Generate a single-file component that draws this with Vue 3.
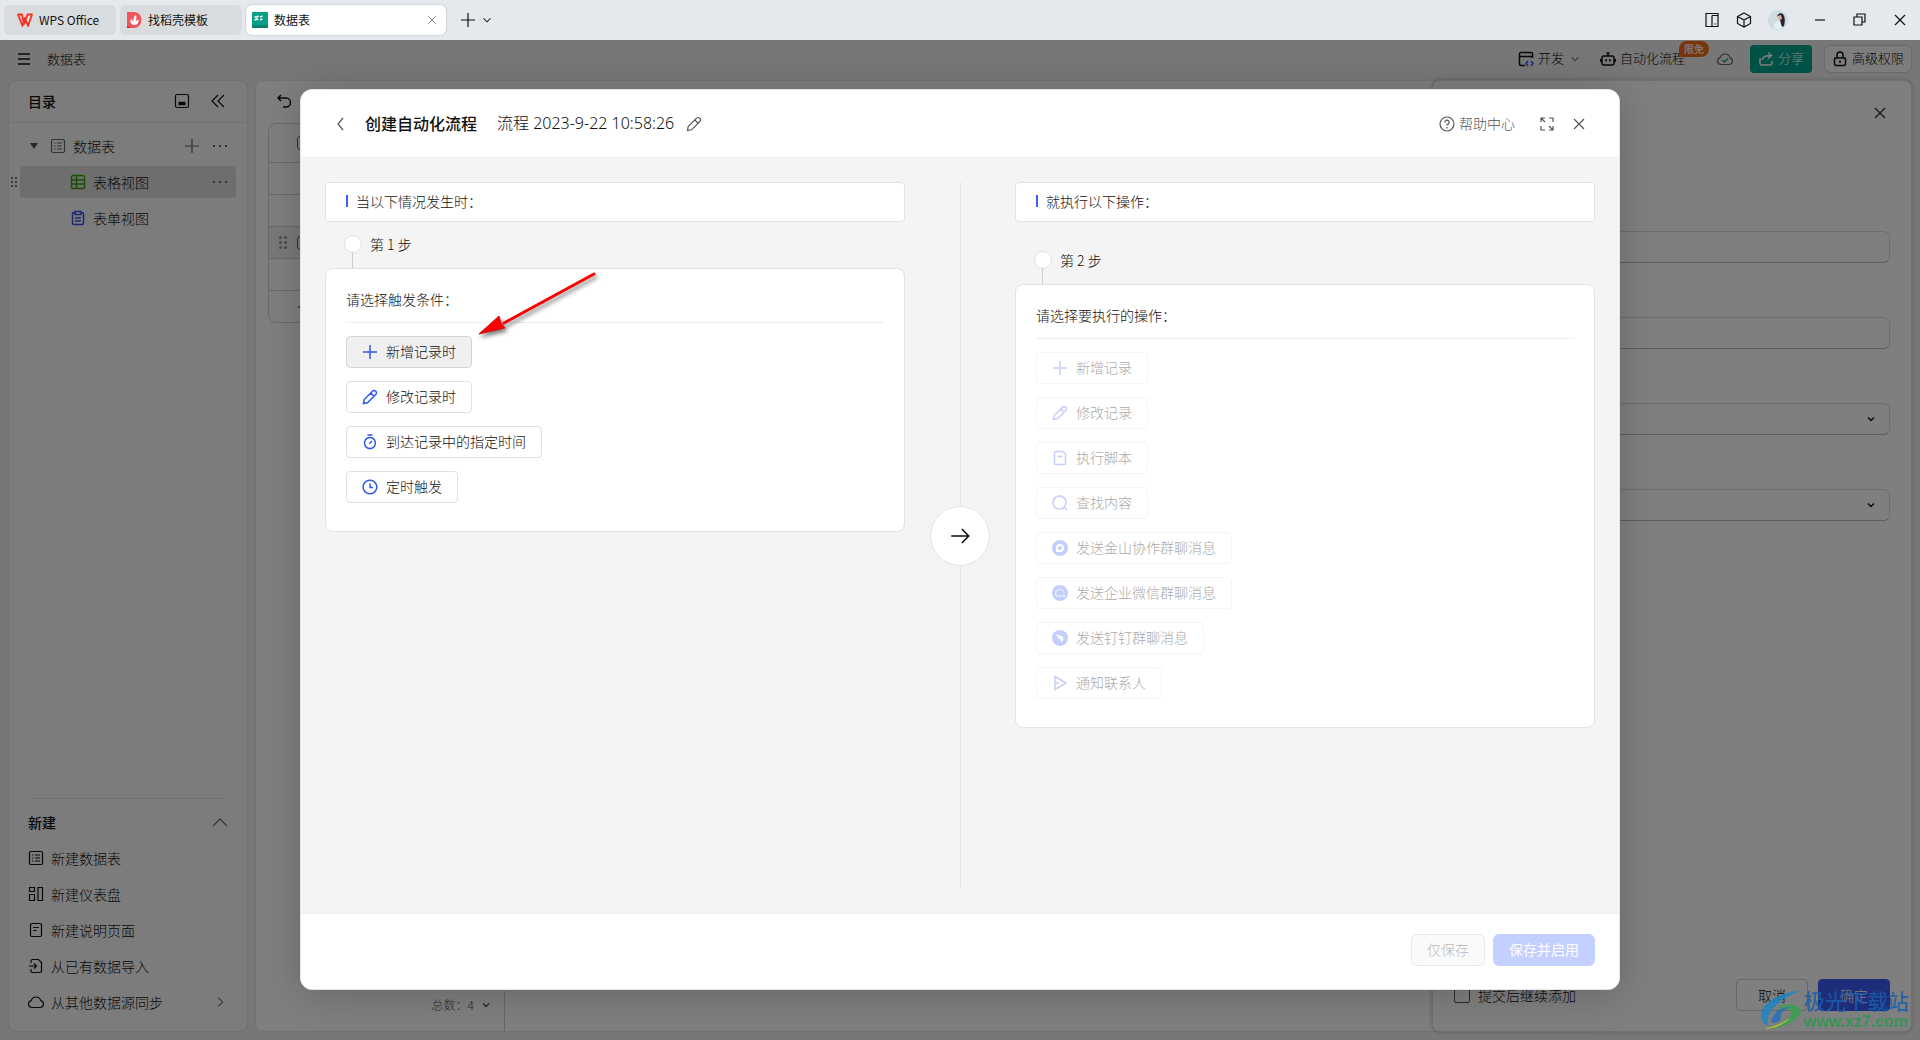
<script setup>
import { h } from 'vue'

const icons = {
  menu: 'M2 3H14M2 8H14M2 13H14',
  close: 'M3 3L13 13M13 3L3 13',
  plus: 'M8 1V15M1 8H15',
  down: 'M4 6L8 10L12 6',
  up: 'M1 12L8 5L15 12',
  right: 'M6 3L11 8L6 13',
  back: 'M10 2L5 8L10 14',
  collapse: 'M8 2L2 8L8 14M14 2L8 8L14 14',
  undo: 'M5 2L2 5L5 8M2 5H10A4 4 0 0 1 10 14H7',
  split: 'M2 1.500H14V14.500H2ZM8 3.500H14M8 3.500V14.500M10.500 12H12',
  cube: 'M8 1L14.500 4.500V11.500L8 15L1.500 11.500V4.500ZM1.500 4.500L8 8L14.500 4.500M8 8V15',
  min: 'M3 8H13',
  restore: 'M2 5H10V13H2ZM5 5V2H13V10H10',
  robot: 'M4 5H12A2 2 0 0 1 14 7V12A2 2 0 0 1 12 14H4A2 2 0 0 1 2 12V7A2 2 0 0 1 4 5ZM8 5V2M6.500 2H9.500M0.500 8V11M15.500 8V11M6 8V10.500M10 8V10.500',
  share: 'M2 7V12A2 2 0 0 0 4 14H12A2 2 0 0 0 14 12V10M4 9C4.500 6 7 4.500 13 4.500M10 1.500L13.500 4.500L10 7.500',
  lock: 'M3.500 7H12.500A1 1 0 0 1 13.500 8V13A1.500 1.500 0 0 1 12 14.500H4A1.500 1.500 0 0 1 2.500 13V8A1 1 0 0 1 3.500 7ZM5 7V4A3 3 0 0 1 11 4V7M8 9.500V12',
  list: 'M3 1.500H13A1.500 1.500 0 0 1 14.500 3V13A1.500 1.500 0 0 1 13 14.500H3A1.500 1.500 0 0 1 1.500 13V3A1.500 1.500 0 0 1 3 1.500ZM4 5H5.500M7 5H12M4 8H5.500M7 8H12M4 11H5.500M7 11H12',
  grid: 'M3 1.500H13A1.500 1.500 0 0 1 14.500 3V13A1.500 1.500 0 0 1 13 14.500H3A1.500 1.500 0 0 1 1.500 13V3A1.500 1.500 0 0 1 3 1.500ZM1.500 6H14.500M1.500 10H14.500M6.500 1.500V14.500',
  clip: 'M5 2.500H4A1.500 1.500 0 0 0 2.500 4V13A1.500 1.500 0 0 0 4 14.500H12A1.500 1.500 0 0 0 13.500 13V4A1.500 1.500 0 0 0 12 2.500H11M5 1.500H11V4.500H5ZM5 8H11M5 11H11',
  board: 'M1.500 1.500H6.500V5.500H1.500ZM1.500 8.500H6.500V14.500H1.500ZM10 1.500H14.500V14.500H10Z',
  page: 'M4 1.500H12A1.500 1.500 0 0 1 13.500 3V13A1.500 1.500 0 0 1 12 14.500H4A1.500 1.500 0 0 1 2.500 13V3A1.500 1.500 0 0 1 4 1.500ZM5 5.500H11M5 8.500H8.500',
  import: 'M3 5V3A1.500 1.500 0 0 1 4.500 1.500H10.500L13.500 4.500V13A1.500 1.500 0 0 1 12 14.500H4.500A1.500 1.500 0 0 1 3 13V11M1 8H8.500M6 5.500L8.500 8L6 10.500',
  cloud: 'M4 13.500A3.500 3.500 0 0 1 3.200 6.600A5 5 0 0 1 12.800 6.600A3.500 3.500 0 0 1 12 13.500Z',
  pencil: 'M1.500 14.500L2.200 10.500L10.500 2.200A2 2 0 0 1 13.800 5.500L5.500 13.800ZM8.800 4L12 7.200',
  timer: 'M8 3.500A5.500 5.500 0 1 1 7.900 3.500ZM5.500 1H10.500M7.300 9.700L10 7',
  clock: 'M8 1.200A6.800 6.800 0 1 1 7.900 1.200ZM8 4.500V8.500H11',
  script: 'M4 1.500H10.500L13.500 4V13A1.500 1.500 0 0 1 12 14.500H4A1.500 1.500 0 0 1 2.500 13V3A1.500 1.500 0 0 1 4 1.500ZM5.500 6.500H10.500',
  search: 'M7.500 1A6.500 6.500 0 1 1 7.400 1ZM12 12L15 15',
  send: 'M3 1.500L14 8L3 14.500ZM3 8H7',
  full: 'M2 6V2H6M10 2H14V6M14 10V14H10M6 14H2V10M2 2L6 6M14 14L10 10',
  arrow: 'M1 8H15M9.500 2.500L15 8L9.500 13.500'
}

const Icon = (p) =>
  h('svg', { class: 'ic', viewBox: '0 0 16 16', 'aria-hidden': 'true' }, [h('path', { d: icons[p.name] })])
Icon.props = ['name']

const createItems = [
  ['list', '新建数据表'],
  ['board', '新建仪表盘'],
  ['page', '新建说明页面'],
  ['import', '从已有数据导入'],
  ['cloud', '从其他数据源同步']
]
const triggers = [
  ['plus', '新增记录时'],
  ['pencil', '修改记录时'],
  ['timer', '到达记录中的指定时间'],
  ['clock', '定时触发']
]
const actions = [
  ['plus', '新增记录'],
  ['pencil', '修改记录'],
  ['script', '执行脚本'],
  ['search', '查找内容'],
  ['woa', '发送金山协作群聊消息'],
  ['wecom', '发送企业微信群聊消息'],
  ['ding', '发送钉钉群聊消息'],
  ['send', '通知联系人']
]
</script>

<template>
  <div class="app">
    <header class="titlebar">
      <button class="tab home">
        <svg class="logo" viewBox="0 0 16 16"><path d="M1 2.500H5L7 12L10.500 2.500H15L11 14L8 6L5.500 14Z" fill="none" stroke="#f5321f" stroke-width="1.800" stroke-linejoin="round" /></svg>
        WPS Office
      </button>
      <button class="tab docer">
        <svg class="logo" viewBox="0 0 16 16"><path d="M1 0H8A7.500 8 0 0 1 8 16H1Z" fill="#f2545b" /><path d="M1 14L5 16H1Z" fill="#c9202c" /><path d="M8 13C4 12 4 9 5 7C6 8 7 9 7.500 10C7 7 8 4 10 3C11 5 10 8 9.500 10C10 8.500 11 8 12.500 7.500C13 11 11 13 8 13Z" fill="#fff" /></svg>
        找稻壳模板
      </button>
      <div class="tab active">
        <svg class="logo" viewBox="0 0 16 16"><rect width="16" height="16" rx="1" fill="#06a087" /><path d="M0 13H16V15A1 1 0 0 1 15 16H1A1 1 0 0 1 0 15Z" fill="#058270" /><path d="M2.500 5H5L6.500 4M8 5L10.500 4M2.500 8L5 7L6 8M8 8L10.500 7" fill="none" stroke="#fff" stroke-width="1.600" /></svg>
        <span class="tab-name">数据表</span>
        <button class="bare thin" aria-label="关闭标签"><Icon name="close" class="s12" /></button>
      </div>
      <button class="bare" aria-label="新建标签"><Icon name="plus" /></button>
      <button class="bare" aria-label="标签列表"><Icon name="down" class="s14" /></button>
      <div class="window">
        <button class="bare" aria-label="分屏"><Icon name="split" /></button>
        <button class="bare" aria-label="应用"><Icon name="cube" /></button>
        <svg class="avatar" viewBox="0 0 20 20"><circle cx="10" cy="10" r="10" fill="#ccdde1" /><path d="M9 6Q11 2 15 4Q18 8 16 16Q14 18 13 14L12 9Z" fill="#2b222b" /><path d="M9 6L13 5L14 9L11 10Z" fill="#d8b0a6" /><path d="M5 17Q7 11 11 11L14 18Q9 21 5 17Z" fill="#e3f0f4" /></svg>
        <button class="bare" aria-label="最小化"><Icon name="min" /></button>
        <button class="bare" aria-label="还原"><Icon name="restore" /></button>
        <button class="bare" aria-label="关闭"><Icon name="close" /></button>
      </div>
    </header>

    <div class="workspace">
      <div class="topbar">
        <button class="bare" aria-label="菜单"><Icon name="menu" class="mid" /></button>
        <span class="doc-name">数据表</span>
        <nav class="tools">
          <button class="bare tool dev">
            <svg class="ic mid" viewBox="0 0 16 16"><path d="M7 14.500H3A1.500 1.500 0 0 1 1.500 13V3A1.500 1.500 0 0 1 3 1.500H13A1.500 1.500 0 0 1 14.500 3V7M1.500 5.500H14.500" /><path d="M10 10L8 12.500L10 15M13 10L15 12.500L13 15" stroke="#3a55f0" /></svg>
            <span>开发</span><Icon name="down" class="chev" />
          </button>
          <button class="bare tool auto"><Icon name="robot" class="mid" /><span>自动化流程</span><span class="badge">限免</span></button>
          <svg class="ic sync" viewBox="0 0 16 16"><path :d="icons.cloud" /><path d="M5.500 9L7.500 11L11 7.500" stroke="#00a060" /></svg>
          <button class="share"><Icon name="share" class="mid" /><span>分享</span></button>
          <button class="perm"><Icon name="lock" class="mid" /><span>高级权限</span></button>
        </nav>
      </div>

      <div class="panels">
        <aside class="sidebar">
          <div class="side-head">
            <h2>目录</h2>
            <button class="bare" aria-label="停靠"><svg class="ic" viewBox="0 0 16 16"><rect x="1.500" y="1.500" width="13" height="13" rx="1.500" /><path d="M4.500 10.500H11.500" stroke-width="3.500" /></svg></button>
            <button class="bare" aria-label="收起"><Icon name="collapse" /></button>
          </div>
          <ul class="tree">
            <li>
              <span class="caret"></span><Icon name="list" class="dim" /><span class="node">数据表</span>
              <button class="bare dim" aria-label="添加"><Icon name="plus" /></button>
              <button class="bare more" aria-label="更多"><i></i><i></i><i></i></button>
            </li>
            <li class="view selected">
              <span class="grip"><i v-for="n in 6" :key="n"></i></span>
              <Icon name="grid" class="green" /><span class="node">表格视图</span>
              <button class="bare more" aria-label="更多"><i></i><i></i><i></i></button>
            </li>
            <li class="view"><Icon name="clip" class="blue" /><span class="node">表单视图</span></li>
          </ul>
          <section class="create">
            <div class="create-head">
              <h2>新建</h2>
              <button class="bare dim" aria-label="折叠"><Icon name="up" /></button>
            </div>
            <button v-for="item in createItems" :key="item[1]" class="bare create-item">
              <Icon :name="item[0]" /><span class="node">{{ item[1] }}</span>
              <Icon v-if="item[0] === 'cloud'" name="right" class="s14 dim" />
            </button>
          </section>
        </aside>

        <main class="sheet">
          <div class="sheet-tools"><button class="bare" aria-label="撤销"><Icon name="undo" class="mid" /></button></div>
          <div class="grid">
            <div class="grow ghead"><span class="tick"></span></div>
            <div class="grow"></div>
            <div class="grow"></div>
            <div class="grow hover"><span class="grip"><i v-for="n in 6" :key="n"></i></span><span class="tick"></span></div>
            <div class="grow"></div>
            <div class="grow"><Icon name="plus" class="add" /></div>
          </div>
          <div class="summary">总数：4<Icon name="down" class="s12 bold" /></div>
          <form class="drawer" @submit.prevent>
            <div class="drawer-head"><button type="button" class="bare" aria-label="关闭面板"><Icon name="close" class="mid" /></button></div>
            <input aria-label="字段一" type="text" />
            <input aria-label="字段二" type="text" />
            <div class="pick"><select aria-label="字段三"></select><Icon name="down" class="s12 bold" /></div>
            <div class="pick"><select aria-label="字段四"></select><Icon name="down" class="s12 bold" /></div>
            <div class="drawer-foot">
              <label><input type="checkbox" />提交后继续添加</label>
              <button type="button" class="cancel">取消</button>
              <button type="button" class="ok">确定</button>
            </div>
          </form>
        </main>
      </div>

      <div class="backdrop">
        <section class="modal" role="dialog" aria-label="创建自动化流程">
          <header class="modal-head">
            <button class="bare" aria-label="返回"><Icon name="back" /></button>
            <h1>创建自动化流程</h1>
            <span class="flow-name">流程 2023-9-22 10:58:26</span>
            <button class="bare" aria-label="重命名"><Icon name="pencil" /></button>
            <a class="help" href="#">
              <svg class="ic" viewBox="0 0 16 16"><circle cx="8" cy="8" r="7" /><path d="M5.800 6.500A2.200 2.200 0 1 1 8 8.600V9.500M8 11V12.400" /></svg><span>帮助中心</span>
            </a>
            <button class="bare" aria-label="全屏"><Icon name="full" /></button>
            <button class="bare" aria-label="关闭对话框"><Icon name="close" /></button>
          </header>

          <div class="modal-body">
            <div class="column">
              <div class="lead">当以下情况发生时：</div>
              <div class="step">第 1 步</div>
              <div class="card">
                <p>请选择触发条件：</p>
                <button v-for="(t, i) in triggers" :key="t[1]" class="option" :class="{ hovered: i === 0 }">
                  <Icon :name="t[0]" /><span>{{ t[1] }}</span>
                </button>
                <svg class="pointer" viewBox="0 0 130 72">
                  <path d="M119 5L29 54" stroke="#f80000" stroke-width="3" stroke-linecap="round" />
                  <path d="M4 65L24 47L26 54L30 59Z" fill="#f80000" stroke="#d01010" stroke-width="1" />
                </svg>
              </div>
            </div>

            <div class="between"><span><Icon name="arrow" /></span></div>

            <div class="column">
              <div class="lead">就执行以下操作：</div>
              <div class="step second">第 2 步</div>
              <div class="card">
                <p>请选择要执行的操作：</p>
                <button v-for="a in actions" :key="a[1]" class="option" disabled>
                  <svg v-if="a[0] === 'woa'" class="ic brand" viewBox="0 0 16 16"><circle cx="8" cy="8" r="8" /><path d="M4 12V8A4 4 0 1 1 8 12Z" fill="#fff" /><circle cx="8" cy="8" r="2" /></svg>
                  <svg v-else-if="a[0] === 'wecom'" class="ic brand" viewBox="0 0 16 16"><circle cx="8" cy="8" r="8" /><path d="M10.500 10.500Q8 12 5.500 10.800L4 11.500V9.500A4.200 3.600 0 1 1 12 7.500M11 10L13 12M13 10L11 12" fill="none" stroke="#fff" stroke-width="0.800" /></svg>
                  <svg v-else-if="a[0] === 'ding'" class="ic brand" viewBox="0 0 16 16"><circle cx="8" cy="8" r="8" /><path d="M4 4L10.500 6.500Q11.500 7 11 8.500L10.500 9.500H11.500L9.500 13L9.700 11H8.500L9 9.500Q6 9 5.500 7.500L7 7.500Q4.500 6.500 4 4Z" fill="#fff" /></svg>
                  <Icon v-else :name="a[0]" /><span>{{ a[1] }}</span>
                </button>
              </div>
            </div>
          </div>

          <footer class="modal-foot">
            <button class="save" disabled>仅保存</button>
            <button class="enable" disabled>保存并启用</button>
          </footer>
        </section>
      </div>
    </div>

    <div class="watermark">
      <svg viewBox="0 0 44 40">
        <path d="M41 1C22 2 4 12 2 24C1 31 5 34 10 36C5 24 18 10 41 1Z" fill="#1f86c4" />
        <path d="M20 16C30 12 42 16 42 21C42 28 28 38 8 39C24 34 34 26 32 22C30 18 24 19 20 22Z" fill="#3aa052" />
        <path d="M8 39C20 37 28 32 31 28C22 34 14 37 7 38Z" fill="#c9cf28" />
        <path d="M12 32C14 22 22 16 32 17C24 19 20 24 22 30C18 32 15 34 12 32Z" fill="#2472bd" />
      </svg>
      <div><strong>极光下载站</strong><span>www.xz7.com</span></div>
    </div>
  </div>
</template>

<style>
body { margin: 0; }
</style>

<style scoped>
.app {
  position: relative;
  display: flex;
  flex-direction: column;
  height: 100vh;
  overflow: hidden;
  font: 14px/20px "Noto Sans CJK SC", sans-serif;
  font-weight: 300;
  color: #111;
}
.app * { box-sizing: border-box; }
button, input, select { font: inherit; color: inherit; margin: 0; }
button { cursor: pointer; white-space: nowrap; }
h1, h2, p, ul { margin: 0; padding: 0; }
h2 { font-size: 14px; font-weight: 500; }
.ic { width: 16px; height: 16px; flex: none; fill: none; stroke: currentColor; stroke-width: 1.2; }
.s12 { width: 12px; height: 12px; }
.s14 { width: 14px; height: 14px; }
.mid { stroke-width: 1.5; }
.bold { stroke-width: 2; }
.bare { display: flex; align-items: center; padding: 0; border: 0; background: none; }
.dim { color: #666; }
.green { color: #3a9a10; stroke-width: 1.5; }
.blue { color: #3a50e8; stroke-width: 1.5; }
.tool span, .share span, .perm span, .help span, .option span, h1, .flow-name { padding-bottom: 2px; }

.titlebar { display: flex; align-items: center; height: 40px; flex: none; padding: 0 12px 0 4px; background: #e5e8ec; gap: 4px; font-size: 12px; font-weight: 400; }
.tab { display: flex; align-items: center; gap: 6px; height: 30px; border: 0; border-radius: 6px; background: #d9dcdf; }
.logo { width: 16px; height: 16px; flex: none; }
.home { width: 112px; padding: 0 0 0 13px; }
.docer { width: 122px; padding: 0 0 0 6px; }
.active { width: 200px; padding: 0 8px 0 6px; background: #fff; box-shadow: 0 0 2px #aaa; margin-right: 10px; }
.tab-name { flex: 1; }
.titlebar .thin { color: #777; }
.window { display: flex; align-items: center; gap: 16px; margin-left: auto; }
.avatar { width: 20px; height: 20px; }
.window .bare:nth-last-child(-n+3) { margin-left: 8px; }

.workspace { position: relative; display: flex; flex-direction: column; flex: 1; min-height: 0; background: #eee; }
.topbar { display: flex; align-items: center; height: 40px; flex: none; padding: 0 9px 2px 16px; gap: 15px; font-size: 13px; }
.tools { display: flex; align-items: center; margin-left: auto; height: 34px; }
.tool { position: relative; gap: 4px; }
.dev { margin-right: 18px; }
.chev { width: 14px; height: 14px; color: #666; }
.tool .badge { position: absolute; left: 79px; top: -7px; width: 30px; height: 16px; padding: 0; border-radius: 8px 8px 8px 2px; background: #f06a14; color: #fff; font-size: 10px; line-height: 16px; text-align: center; font-weight: 500; }
.auto { margin-right: 32px; }
.sync { margin-right: 17px; color: #666; }
.share { display: flex; align-items: center; justify-content: center; gap: 4px; width: 62px; height: 28px; padding: 0; border: 0; border-radius: 4px; background: #00a48c; color: #fff; margin-right: 13px; }
.perm { display: flex; align-items: center; justify-content: center; gap: 4px; width: 86px; height: 26px; padding: 0; border: 0; border-radius: 5px; background: #fafafa; box-shadow: 0 0 2px #999; }

.panels { display: flex; flex: 1; min-height: 0; gap: 7px; padding: 0 8px 8px; }
.sidebar { display: flex; flex-direction: column; width: 240px; flex: none; border: 1px solid #e2e2e2; border-radius: 8px; background: #f8f8f8; }
.side-head { display: flex; align-items: center; gap: 20px; height: 42px; flex: none; padding: 0 21px 2px 19px; border-bottom: 1px solid #e4e4e4; }
.side-head h2 { flex: 1; }
.tree { list-style: none; padding: 7px 11px; }
.tree li { position: relative; display: flex; align-items: center; height: 32px; margin-bottom: 4px; padding: 0 8px 0 10px; border-radius: 4px; }
.tree .view { padding-left: 50px; }
.tree .selected { background: #dcdcdc; }
.caret { border: 4px solid transparent; border-top: 6px solid #555; border-bottom: 0; margin-right: 12px; }
.node { flex: 1; text-align: left; margin-left: 7px; padding-bottom: 1px; }
.more { gap: 4px; width: 16px; justify-content: center; margin-left: 12px; }
.more i { width: 2px; height: 2px; background: #666; }
.grip { display: grid; grid-template-columns: 2px 2px; gap: 2px; }
.grip i { width: 2px; height: 2px; background: #777; }
.selected .grip { position: absolute; left: -9px; top: 11px; }
.create { margin: auto 19px 11px; border-top: 1px solid #e4e4e4; padding-top: 5px; }
.create-head { display: flex; align-items: center; justify-content: space-between; height: 36px; }
.create-item { width: 100%; height: 36px; padding-right: 1px; }

.sheet { position: relative; display: flex; flex-direction: column; flex: 1; min-width: 0; border: 1px solid #e2e2e2; border-radius: 8px; background: #fff; }
.sheet-tools { display: flex; align-items: center; height: 42px; padding: 0 0 2px 20px; }
.grid { width: 1100px; margin-left: 12px; border: 1px solid #d4d4d4; border-radius: 8px; }
.grow { display: flex; align-items: center; height: 32px; padding-left: 28px; border-top: 1px solid #d4d4d4; }
.ghead { height: 38px; border-top: 0; }
.hover { background: #f2f2f2; padding-left: 10px; gap: 10px; }
.tick { width: 14px; height: 14px; border: 1px solid #666; border-radius: 3px; }
.hover .grip { grid-template-columns: 3px 3px; }
.hover .grip i { width: 3px; height: 3px; border-radius: 50%; background: #999; }
.summary { display: flex; align-items: flex-start; justify-content: flex-end; gap: 6px; width: 249px; height: 40px; margin-top: auto; padding: 4px 12px 0 0; border-right: 1px solid #ccc; font-size: 12px; color: #555; }
.summary .ic { margin-top: 4px; }
.drawer { position: absolute; right: -1px; top: -1px; bottom: -1px; display: flex; flex-direction: column; width: 480px; padding: 0 21px; border: 1px solid #e0e0e0; border-radius: 8px; background: #fff; box-shadow: 0 0 4px #bbb; }
.drawer-head { display: flex; align-items: center; justify-content: flex-end; height: 64px; color: #444; margin-bottom: 86px; padding-right: 2px; }
.drawer > input, .pick { flex: none; width: 100%; height: 32px; margin-bottom: 54px; border: 1px solid #ddd; border-bottom-color: #bbb; border-radius: 6px; background: #fff; }
.pick { display: flex; align-items: center; padding-right: 12px; }
.pick select { flex: 1; height: 28px; border: 0; background: none; appearance: none; }
.drawer-foot { display: flex; align-items: center; gap: 10px; height: 32px; margin: auto 0 20px; }
.drawer-foot label { display: flex; align-items: center; gap: 8px; margin-right: auto; }
.drawer-foot input { appearance: none; width: 16px; height: 16px; border: 1px solid #555; border-radius: 2px; }
.cancel, .ok { width: 72px; height: 32px; padding: 0; border: 1px solid #ccc; border-radius: 4px; background: #fff; }
.ok { border-color: #3c5af5; background: #3c5af5; color: #fff; }

.backdrop { position: absolute; inset: 0; display: flex; padding: 49px 300px 50px; background: rgba(0, 0, 0, .5); }
.modal { display: flex; flex-direction: column; flex: 1; min-width: 0; border: 1px solid #e4e4e4; border-radius: 12px; background: #f4f4f4; overflow: hidden; box-shadow: 0 4px 40px rgba(0, 0, 0, .2); }
.modal-head { display: flex; align-items: center; height: 68px; flex: none; padding: 0 32px; background: #fff; border-bottom: 1px solid #eee; }
.modal-head .bare, .help { color: #555; }
h1 { font-size: 16px; font-weight: 500; margin: 0 20px 0 16px; }
.flow-name { font-family: "Noto Sans", "Noto Sans CJK SC", sans-serif; font-size: 16px; margin-right: 12px; }
.help { display: flex; align-items: center; gap: 4px; margin-left: auto; margin-right: 24px; text-decoration: none; }
.help + .bare { margin-right: 16px; }
.modal-body { display: flex; flex: 1; min-height: 0; padding: 24px; }
.column { flex: 1; }
.lead { display: flex; align-items: center; gap: 8px; height: 40px; padding: 0 20px 2px; border: 1px solid #e2e2e2; border-radius: 4px; background: #fff; }
.lead::before { content: ""; width: 2px; height: 12px; background: #3c5ef5; }
.step { position: relative; display: flex; align-items: center; gap: 8px; height: 46px; padding: 0 0 2px 19px; }
.step::before { content: ""; width: 16px; height: 16px; border: 1px solid #e0e0e0; border-radius: 50%; background: #fff; }
.step::after { content: ""; position: absolute; left: 27px; top: 30px; bottom: 0; border-left: 1px solid #ccc; }
.second { margin-top: 16px; }
.card { position: relative; display: flex; flex-direction: column; align-items: flex-start; gap: 13px; padding: 0 20px 28px; border: 1px solid #e2e2e2; border-radius: 8px; background: #fff; }
.card p { align-self: stretch; height: 54px; padding-top: 20px; border-bottom: 1px solid #eee; }
.option { display: flex; align-items: center; gap: 8px; height: 32px; padding: 0 15px; border: 1px solid #e0e0e0; border-radius: 4px; background: #fff; }
.option .ic { color: #2f5ae8; stroke-width: 1.5; }
.option.hovered { background: #f0f0f0; border-color: #d4d4d4; }
.option:disabled { color: #aaa; border-color: #f5f5f5; }
.option:disabled .ic { color: #c4d0fb; }
.option .brand { stroke: none; fill: #c4d0fb; }
.pointer { position: absolute; left: 149px; top: 0; width: 130px; height: 72px; fill: none; filter: drop-shadow(2px 3px 2px rgba(0, 0, 0, .5)); }
.between { display: flex; align-items: center; justify-content: center; width: 110px; background: linear-gradient(#e6e6e6, #e6e6e6) center / 1px 100% no-repeat; }
.between span { display: flex; align-items: center; justify-content: center; width: 60px; height: 60px; border: 1px solid #e4e4e4; border-radius: 50%; background: #fff; }
.between .ic { width: 20px; height: 20px; }
.modal-foot { display: flex; align-items: center; justify-content: flex-end; gap: 8px; height: 76px; flex: none; padding: 0 24px 4px; background: #fff; border-top: 1px solid #eee; }
.save, .enable { height: 32px; padding: 0 15px 2px; border: 1px solid #e8e8e8; border-radius: 6px; background: #fafafa; color: #bbb; }
.enable { border-color: #c4d0ff; background: #c4d0ff; color: #fff; font-weight: 400; }

.watermark { position: absolute; right: 11px; bottom: 8px; display: flex; align-items: center; gap: 1px; opacity: .85; }
.watermark svg { width: 44px; height: 40px; }
.watermark div { display: flex; flex-direction: column; }
.watermark strong { font-size: 21px; line-height: 24px; font-weight: 500; color: #1a5da8; }
.watermark span { font: bold 16px/20px "Liberation Sans", sans-serif; color: #2a9a50; }
</style>
